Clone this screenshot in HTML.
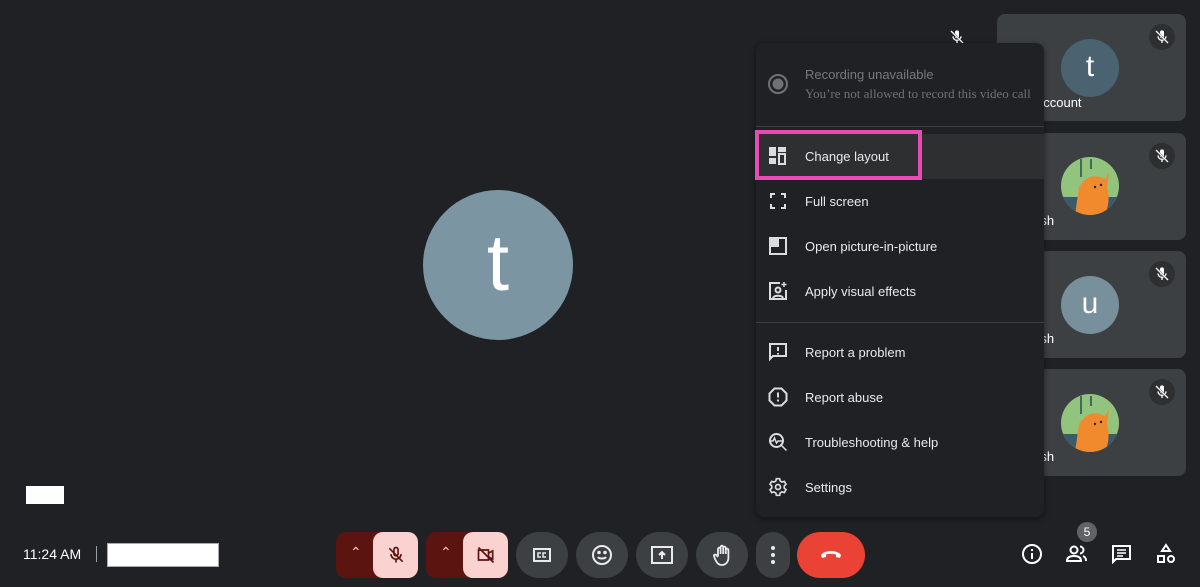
<!DOCTYPE html>
<html><head><meta charset="utf-8"><style>
*{margin:0;padding:0;box-sizing:border-box}
body{width:1200px;height:587px;background:#202124;position:relative;overflow:hidden;font-family:"Liberation Sans",Arial,sans-serif;color:#e8eaed}
.abs{position:absolute}
.tile{position:absolute;left:997px;width:189px;height:107px;background:#3c4043;border-radius:8px}
.av{position:absolute;left:1061px;width:58px;height:58px;border-radius:50%;color:#fff;font-size:30px;text-align:center;line-height:56px}
.nm{position:absolute;left:1043px;font-size:13px;color:#fff}
.mute{position:absolute;width:26px;height:26px;border-radius:50%;background:#2d2f31;display:flex;align-items:center;justify-content:center}
.menu{position:absolute;left:756px;top:43px;width:288px;height:474px;background:#202124;border-radius:8px;box-shadow:0 2px 6px rgba(0,0,0,.5)}
.it{position:absolute;left:0;width:288px;height:44px;display:flex;align-items:center;font-size:13px;color:#e8eaed}
.it svg{position:absolute;left:12px}
.it span{position:absolute;left:49px}
.div{position:absolute;left:0;width:288px;height:1px;background:#3c4043}
.btn{position:absolute;top:532px;height:46px;border-radius:23px;background:#3c4043;display:flex;align-items:center;justify-content:center}
.cat{cat:1}
</style></head><body>

<!-- main avatar -->
<div class="abs" style="left:423px;top:190px;width:150px;height:150px;border-radius:50%;background:#7b95a3;color:#fff;font-size:80px;text-align:center;line-height:145px">t</div>
<div class="abs" style="left:949px;top:29px"><svg width="16" height="16" viewBox="0 0 24 24" fill="#fff"><path d="M12 14a3 3 0 0 0 3-3V5a3 3 0 0 0-6 0v6a3 3 0 0 0 3 3zm5-3a5 5 0 0 1-10 0H5a7 7 0 0 0 6 6.9V21h2v-3.1A7 7 0 0 0 19 11z"/><path d="M3 3l18 18" stroke="#202124" stroke-width="3"/><path d="M3 3l18 18" stroke="#fff" stroke-width="2"/></svg></div>

<!-- tiles -->
<div class="tile" style="top:14px"></div>
<div class="tile" style="top:133px"></div>
<div class="tile" style="top:251px"></div>
<div class="tile" style="top:369px"></div>
<div class="av" style="top:39px;background:#4b6270">t</div>
<div class="av" style="top:276px;background:#78909c">u</div>
<div class="av" style="top:157px;background:#93c47d;overflow:hidden"><svg width="58" height="58" viewBox="0 0 58 58"><rect y="40" width="58" height="18" fill="#3b5a6b"/><path d="M14 58 L18 30 Q28 14 44 22 L48 16 L46 30 Q50 44 44 58Z" fill="#f08a2c"/><circle cx="34" cy="30" r="1.2" fill="#222"/><circle cx="40" cy="28" r="1.2" fill="#222"/><path d="M20 2v18M30 2v10" stroke="#2c4a58" stroke-width="1.5"/></svg></div>
<div class="av" style="top:394px;background:#93c47d;overflow:hidden"><svg width="58" height="58" viewBox="0 0 58 58"><rect y="40" width="58" height="18" fill="#3b5a6b"/><path d="M14 58 L18 30 Q28 14 44 22 L48 16 L46 30 Q50 44 44 58Z" fill="#f08a2c"/><circle cx="34" cy="30" r="1.2" fill="#222"/><circle cx="40" cy="28" r="1.2" fill="#222"/><path d="M20 2v18M30 2v10" stroke="#2c4a58" stroke-width="1.5"/></svg></div>
<div class="nm" style="top:95px;left:1036px">account</div>
<div class="nm" style="top:213px;left:1036px">rsh</div>
<div class="nm" style="top:331px;left:1036px">rsh</div>
<div class="nm" style="top:449px;left:1036px">rsh</div>
<div class="mute" style="left:1149px;top:24px"><svg width="16" height="16" viewBox="0 0 24 24" fill="#fff"><path d="M12 14a3 3 0 0 0 3-3V5a3 3 0 0 0-6 0v6a3 3 0 0 0 3 3zm5-3a5 5 0 0 1-10 0H5a7 7 0 0 0 6 6.9V21h2v-3.1A7 7 0 0 0 19 11z"/><path d="M3 3l18 18" stroke="#2d2f31" stroke-width="3"/><path d="M3 3l18 18" stroke="#fff" stroke-width="2"/></svg></div>
<div class="mute" style="left:1149px;top:143px"><svg width="16" height="16" viewBox="0 0 24 24" fill="#fff"><path d="M12 14a3 3 0 0 0 3-3V5a3 3 0 0 0-6 0v6a3 3 0 0 0 3 3zm5-3a5 5 0 0 1-10 0H5a7 7 0 0 0 6 6.9V21h2v-3.1A7 7 0 0 0 19 11z"/><path d="M3 3l18 18" stroke="#2d2f31" stroke-width="3"/><path d="M3 3l18 18" stroke="#fff" stroke-width="2"/></svg></div>
<div class="mute" style="left:1149px;top:261px"><svg width="16" height="16" viewBox="0 0 24 24" fill="#fff"><path d="M12 14a3 3 0 0 0 3-3V5a3 3 0 0 0-6 0v6a3 3 0 0 0 3 3zm5-3a5 5 0 0 1-10 0H5a7 7 0 0 0 6 6.9V21h2v-3.1A7 7 0 0 0 19 11z"/><path d="M3 3l18 18" stroke="#2d2f31" stroke-width="3"/><path d="M3 3l18 18" stroke="#fff" stroke-width="2"/></svg></div>
<div class="mute" style="left:1149px;top:379px"><svg width="16" height="16" viewBox="0 0 24 24" fill="#fff"><path d="M12 14a3 3 0 0 0 3-3V5a3 3 0 0 0-6 0v6a3 3 0 0 0 3 3zm5-3a5 5 0 0 1-10 0H5a7 7 0 0 0 6 6.9V21h2v-3.1A7 7 0 0 0 19 11z"/><path d="M3 3l18 18" stroke="#2d2f31" stroke-width="3"/><path d="M3 3l18 18" stroke="#fff" stroke-width="2"/></svg></div>

<!-- menu -->
<div class="menu">
 <svg class="abs" style="left:11px;top:30px" width="22" height="22" viewBox="0 0 22 22"><circle cx="11" cy="11" r="9" fill="none" stroke="#6f7175" stroke-width="2"/><circle cx="11" cy="11" r="5.5" fill="#6f7175"/></svg>
 <div class="abs" style="left:49px;top:24px;font-size:13px;color:#76787c">Recording unavailable</div>
 <div class="abs" style="left:49px;top:43px;font-size:13px;color:#6f7175;font-family:'Liberation Serif',serif">You’re not allowed to record this video call</div>
 <div class="div" style="top:83px"></div>
 <div class="abs" style="left:0;top:91px;width:288px;height:45px;background:#2e2f31"></div>
 <div class="abs" style="left:-1px;top:87px;width:167px;height:50px;border:4px solid #ea4ab3"></div>
 <div class="it" style="top:91px"><svg width="20" height="20" viewBox="0 0 20 20" fill="#dadce0"><rect x="1" y="1" width="7" height="9"/><rect x="10" y="1" width="8" height="5"/><rect x="1" y="12" width="7" height="6"/><rect x="11" y="8" width="6" height="10" fill="none" stroke="#dadce0" stroke-width="2"/></svg><span>Change layout</span></div>
 <div class="it" style="top:136px"><svg width="20" height="20" viewBox="0 0 20 20" fill="none" stroke="#dadce0" stroke-width="2"><path d="M3 7V3h4M13 3h4v4M17 13v4h-4M7 17H3v-4"/></svg><span>Full screen</span></div>
 <div class="it" style="top:181px"><svg width="20" height="20" viewBox="0 0 20 20"><rect x="2" y="2" width="16" height="16" fill="none" stroke="#dadce0" stroke-width="2"/><rect x="3" y="3" width="8" height="8" fill="#dadce0"/></svg><span>Open picture-in-picture</span></div>
 <div class="it" style="top:226px"><svg width="20" height="20" viewBox="0 0 20 20" fill="none" stroke="#dadce0" stroke-width="2"><path d="M12 2H2v16h16V9"/><circle cx="10" cy="9" r="2.5"/><path d="M5 17c1-3 9-3 10 0"/><path d="M16 1v5M13.5 3.5h5" stroke-width="1.5"/></svg><span>Apply visual effects</span></div>
 <div class="div" style="top:279px"></div>
 <div class="it" style="top:287px"><svg width="20" height="20" viewBox="0 0 20 20" fill="none" stroke="#dadce0" stroke-width="2"><path d="M2 2h16v12H5l-3 3z"/><path d="M10 5v4M10 11v1.5"/></svg><span>Report a problem</span></div>
 <div class="it" style="top:332px"><svg width="20" height="20" viewBox="0 0 20 20" fill="none" stroke="#dadce0" stroke-width="2"><path d="M6.5 1.5h7l5 5v7l-5 5h-7l-5-5v-7z"/><path d="M10 5.5v5M10 12.5v2"/></svg><span>Report abuse</span></div>
 <div class="it" style="top:377px"><svg width="20" height="20" viewBox="0 0 20 20" fill="none" stroke="#dadce0" stroke-width="2"><circle cx="8.5" cy="8.5" r="6.5"/><path d="M13.5 13.5l5 5M1 9h4l1.5-3 2 5 1.5-2h4" stroke-width="1.5"/></svg><span>Troubleshooting &amp; help</span></div>
 <div class="it" style="top:422px"><svg width="20" height="20" viewBox="0 0 24 24" fill="none" stroke="#dadce0" stroke-width="2"><circle cx="12" cy="12" r="3"/><path d="M10 2h4l.6 2.8 2.3 1.3 2.7-.9 2 3.5-2.1 1.9v2.7l2.1 1.9-2 3.5-2.7-.9-2.3 1.3L14 22h-4l-.6-2.8-2.3-1.3-2.7.9-2-3.5 2.1-1.9v-2.7L2.4 8.7l2-3.5 2.7.9 2.3-1.3z"/></svg><span>Settings</span></div>
</div>

<!-- bottom left -->
<div class="abs" style="left:26px;top:486px;width:38px;height:18px;background:#fff"></div>
<div class="abs" style="left:23px;top:546px;font-size:14px;color:#fff">11:24 AM</div>
<div class="abs" style="left:96px;top:546px;width:1px;height:16px;background:#9aa0a6"></div>
<div class="abs" style="left:107px;top:543px;width:112px;height:24px;background:#fff;border:1px solid #aaa"></div>

<!-- controls -->
<div class="abs" style="left:336px;top:532px;width:82px;height:46px;background:#5c1410;border-radius:10px"></div>
<div class="abs" style="left:373px;top:532px;width:45px;height:46px;background:#fad2cf;border-radius:10px;display:flex;align-items:center;justify-content:center"><svg width="20" height="20" viewBox="0 0 24 24" fill="none" stroke="#5c1410" stroke-width="2"><path d="M12 3a2.5 2.5 0 0 1 2.5 2.5v5a2.5 2.5 0 0 1-5 0v-5A2.5 2.5 0 0 1 12 3zM6 11a6 6 0 0 0 12 0M12 17v4M4 4l16 16"/></svg></div>
<div class="abs" style="left:350px;top:544px;color:#f5c6c2;font-size:14px">&#8963;</div>
<div class="abs" style="left:426px;top:532px;width:82px;height:46px;background:#5c1410;border-radius:10px"></div>
<div class="abs" style="left:463px;top:532px;width:45px;height:46px;background:#fad2cf;border-radius:10px;display:flex;align-items:center;justify-content:center"><svg width="20" height="20" viewBox="0 0 24 24" fill="none" stroke="#5c1410" stroke-width="2"><path d="M3 6h12v12H3zM15 10l5-3v10l-5-3M3 3l18 18"/></svg></div>
<div class="abs" style="left:440px;top:544px;color:#f5c6c2;font-size:14px">&#8963;</div>
<div class="btn" style="left:516px;width:52px"><svg width="20" height="20" viewBox="0 0 20 20" fill="none" stroke="#e8eaed" stroke-width="2"><rect x="2" y="4" width="16" height="12"/><path d="M9 8H6v4h3M14 8h-3v4h3" stroke-width="1.5"/></svg></div>
<div class="btn" style="left:576px;width:52px"><svg width="22" height="22" viewBox="0 0 22 22" fill="none" stroke="#e8eaed" stroke-width="2"><circle cx="11" cy="11" r="9"/><path d="M7 13c1 2 7 2 8 0"/><circle cx="8" cy="8.5" r=".8" fill="#e8eaed"/><circle cx="14" cy="8.5" r=".8" fill="#e8eaed"/></svg></div>
<div class="btn" style="left:636px;width:52px"><svg width="22" height="20" viewBox="0 0 22 20" fill="none" stroke="#e8eaed" stroke-width="2"><rect x="1" y="2" width="20" height="16"/><path d="M11 14V7M8 10l3-3 3 3" fill="#e8eaed"/></svg></div>
<div class="btn" style="left:696px;width:52px"><svg width="22" height="22" viewBox="0 0 22 22" fill="none" stroke="#e8eaed" stroke-width="1.8"><path d="M7 12V5a1.3 1.3 0 0 1 2.6 0v5V3a1.3 1.3 0 0 1 2.6 0v7V4a1.3 1.3 0 0 1 2.6 0v6V6a1.3 1.3 0 0 1 2.6 0v8c0 4-3 7-6.5 7S6 19 4 15l-1-3a1.3 1.3 0 0 1 2.3-1L7 13"/></svg></div>
<div class="btn" style="left:756px;width:34px"><svg width="6" height="20" viewBox="0 0 6 20" fill="#e8eaed"><circle cx="3" cy="3" r="2"/><circle cx="3" cy="10" r="2"/><circle cx="3" cy="17" r="2"/></svg></div>
<div class="btn" style="left:797px;width:68px;background:#ea4335"><svg width="22" height="10" viewBox="0 0 22 10" fill="#fff"><path d="M11 1C6 1 2 3 1 5l1 3 4-1V4.5c3-1 7-1 10 0V7l4 1 1-3C20 3 16 1 11 1z"/></svg></div>

<!-- right icons -->
<svg class="abs" style="left:1021px;top:543px" width="22" height="22" viewBox="0 0 22 22" fill="none" stroke="#fff" stroke-width="2"><circle cx="11" cy="11" r="9"/><path d="M11 10v6M11 6v2"/></svg>
<div class="abs" style="left:1077px;top:522px;width:20px;height:20px;border-radius:50%;background:#5f6368;color:#fff;font-size:12px;text-align:center;line-height:20px">5</div>
<svg class="abs" style="left:1065px;top:544px" width="24" height="20" viewBox="0 0 24 20" fill="none" stroke="#fff" stroke-width="2"><circle cx="9" cy="6" r="3.5"/><path d="M2 17c0-4 3-5 7-5s7 1 7 5z"/><path d="M15 2.5a3.5 3.5 0 0 1 0 7M18 12c2 1 3 2 3 5" /></svg>
<svg class="abs" style="left:1111px;top:544px" width="21" height="20" viewBox="0 0 21 20" fill="none" stroke="#fff" stroke-width="2"><path d="M2 2h17v13H5l-3 3z"/><path d="M6 6h9M6 9h9M6 12h6" stroke-width="1.5"/></svg>
<svg class="abs" style="left:1156px;top:543px" width="20" height="22" viewBox="0 0 20 22" fill="none" stroke="#fff" stroke-width="2"><path d="M10 2l4 6H6z"/><rect x="2" y="13" width="6" height="6"/><circle cx="15" cy="16" r="3"/></svg>
</body></html>
